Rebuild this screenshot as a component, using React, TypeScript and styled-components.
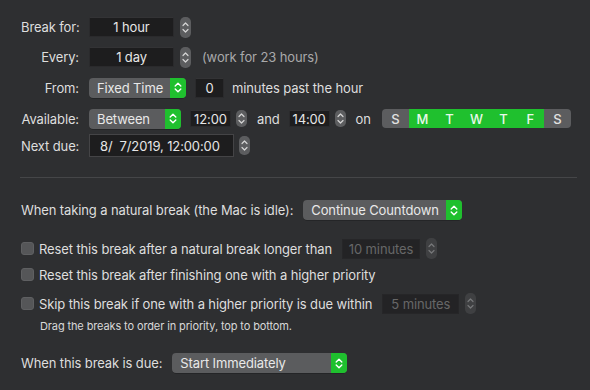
import React from "react";
import styled, { createGlobalStyle } from "styled-components";

const Global = createGlobalStyle`
  html, body { margin: 0; padding: 0; background: #2e2f31; }
  body { width: 590px; height: 390px; overflow: hidden; font-family: Inter, "Noto Sans", sans-serif; font-size: 13px; letter-spacing: -0.12px; color: #dedede; -webkit-font-smoothing: antialiased; }
`;

const Page = styled.div`
  width: 590px;
  height: 390px;
  box-sizing: border-box;
  padding: 12px 13px 0 21px;
  display: flex;
  flex-direction: column;
`;

const Row = styled.div<{ $h: number; $mt?: number }>`
  display: flex;
  align-items: center;
  height: ${(p) => p.$h}px;
  margin-top: ${(p) => p.$mt ?? 0}px;
`;

const Label = styled.div`
  width: 58px;
  text-align: right;
  margin-right: 10px;
  white-space: nowrap;
  color: #dedede;
`;

const Text = styled.span<{ $ml?: number; $muted?: boolean }>`
  margin-left: ${(p) => p.$ml ?? 0}px;
  white-space: nowrap;
  color: ${(p) => (p.$muted ? "#a9a9aa" : "#dedede")};
`;

const Field = styled.div<{ $w: number; $h?: number; $align?: string; $disabled?: boolean; $ml?: number; $pad?: number }>`
  box-sizing: border-box;
  width: ${(p) => p.$w}px;
  height: ${(p) => p.$h ?? 20}px;
  margin-left: ${(p) => p.$ml ?? 0}px;
  background: ${(p) => (p.$disabled ? "#232325" : "#1d1d1e")};
  border: 1px solid ${(p) => (p.$disabled ? "#262628" : "#2a2a2c")};
  border-top-color: ${(p) => (p.$disabled ? "#262628" : "#333335")};
  color: ${(p) => (p.$disabled ? "#676768" : "#e6e6e6")};
  display: flex;
  align-items: center;
  justify-content: ${(p) => p.$align ?? "center"};
  padding-left: ${(p) => p.$pad ?? 0}px;
  white-space: nowrap;
  font-size: 13px;
`;

const BorderField = styled(Field)`
  border: 1px solid #444446;
`;

const StepperBox = styled.div<{ $ml?: number; $disabled?: boolean; $h?: number }>`
  width: 11px;
  height: ${(p) => p.$h ?? 21}px;
  margin-left: ${(p) => p.$ml ?? 6}px;
  border-radius: 5px;
  background: ${(p) => (p.$disabled ? "#3f4042" : "#5c5d5f")};
  display: flex;
  align-items: center;
  justify-content: center;
`;

const Stepper: React.FC<{ ml?: number; disabled?: boolean; h?: number }> = ({ ml, disabled, h }) => (
  <StepperBox $ml={ml} $disabled={disabled} $h={h}>
    <svg width="7" height="13" viewBox="0 0 7 13">
      <path
        d="M1 4.5 L3.5 2 L6 4.5 M1 8.5 L3.5 11 L6 8.5"
        fill="none"
        stroke={disabled ? "#77787a" : "#d6d6d6"}
        strokeWidth="1.2"
        strokeLinecap="round"
        strokeLinejoin="round"
      />
    </svg>
  </StepperBox>
);

const PopupBox = styled.div<{ $w: number; $ml?: number }>`
  box-sizing: border-box;
  width: ${(p) => p.$w}px;
  height: 20px;
  margin-left: ${(p) => p.$ml ?? 0}px;
  border-radius: 4px;
  background: #5b5c5e;
  display: flex;
  align-items: stretch;
  overflow: hidden;
  box-shadow: 0 0.5px 0 rgba(0, 0, 0, 0.4);
`;

const PopupLabel = styled.div`
  flex: 1;
  display: flex;
  align-items: center;
  padding-left: 8px;
  color: #e8e8e8;
  white-space: nowrap;
`;

const PopupArrow = styled.div`
  width: 16px;
  background: #1fc02e;
  display: flex;
  align-items: center;
  justify-content: center;
`;

const Popup: React.FC<{ w: number; ml?: number; children: React.ReactNode }> = ({ w, ml, children }) => (
  <PopupBox $w={w} $ml={ml}>
    <PopupLabel>{children}</PopupLabel>
    <PopupArrow>
      <svg width="8" height="13" viewBox="0 0 8 13">
        <path
          d="M1.2 5 L4 2.2 L6.8 5 M1.2 8 L4 10.8 L6.8 8"
          fill="none"
          stroke="#ffffff"
          strokeWidth="1.4"
          strokeLinecap="round"
          strokeLinejoin="round"
        />
      </svg>
    </PopupArrow>
  </PopupBox>
);

const Days = styled.div`
  display: flex;
  margin-left: 11px;
  height: 19px;
  border-radius: 4px;
  overflow: hidden;
`;

const Day = styled.div<{ $on: boolean }>`
  width: 27px;
  display: flex;
  align-items: center;
  justify-content: center;
  background: ${(p) => (p.$on ? "#1fc02e" : "#5c5d5f")};
  color: ${(p) => (p.$on ? "#e9f8ea" : "#e2e2e2")};
  font-weight: 500;
  font-size: 13px;
`;

const Separator = styled.div`
  height: 1px;
  background: #454648;
  margin: 20px 0 0 -1px;
  width: 557px;
`;

const Check = styled.div`
  box-sizing: border-box;
  width: 13px;
  height: 13px;
  border-radius: 3px;
  background: #555658;
  border: 1px solid #5f6062;
  margin-right: 5px;
  flex-shrink: 0;
`;

const Note = styled.div`
  margin-left: 19px;
  font-size: 11px;
  color: #d8d8d8;
  height: 14px;
  display: flex;
  align-items: center;
  margin-top: 5px;
`;

const days = ["S", "M", "T", "W", "T", "F", "S"];

export default function App() {
  return (
    <Page>
      <Global />
      <Row $h={30}>
        <Label>Break for:</Label>
        <Field $w={85}>1 hour</Field>
        <Stepper ml={6} />
      </Row>
      <Row $h={30}>
        <Label>Every:</Label>
        <Field $w={85}>1 day</Field>
        <Stepper ml={6} />
        <Text $ml={11} $muted>(work for 23 hours)</Text>
      </Row>
      <Row $h={31}>
        <Label>From:</Label>
        <Popup w={97}>Fixed Time</Popup>
        <Field $w={29} $ml={9}>0</Field>
        <Text $ml={8}>minutes past the hour</Text>
      </Row>
      <Row $h={31}>
        <Label>Available:</Label>
        <Popup w={92}>Between</Popup>
        <Field $w={41} $ml={9} $h={17}>12:00</Field>
        <Stepper ml={5} h={17} />
        <Text $ml={10}>and</Text>
        <Field $w={41} $ml={9} $h={17}>14:00</Field>
        <Stepper ml={5} h={17} />
        <Text $ml={10}>on</Text>
        <Days>
          {days.map((d, i) => (
            <Day key={i} $on={i > 0 && i < 6}>{d}</Day>
          ))}
        </Days>
      </Row>
      <Row $h={23}>
        <Label>Next due:</Label>
        <BorderField $w={145} $h={23} $align="flex-start" $pad={10}>8/&nbsp;&nbsp;7/2019, 12:00:00</BorderField>
        <Stepper ml={5} h={19} />
      </Row>
      <Separator />
      <Row $h={20} $mt={22}>
        <Text>When taking a natural break (the Mac is idle):</Text>
        <Popup w={159} ml={10}>Continue Countdown</Popup>
      </Row>
      <Row $h={21} $mt={18}>
        <Check />
        <Text>Reset this break after a natural break longer than</Text>
        <Field $w={78} $ml={10} $disabled>10 minutes</Field>
        <Stepper ml={6} disabled />
      </Row>
      <Row $h={21} $mt={5}>
        <Check />
        <Text>Reset this break after finishing one with a higher priority</Text>
      </Row>
      <Row $h={21} $mt={8}>
        <Check />
        <Text>Skip this break if one with a higher priority is due within</Text>
        <Field $w={77} $ml={10} $disabled>5 minutes</Field>
        <Stepper ml={6} disabled />
      </Row>
      <Note>Drag the breaks to order in priority, top to bottom.</Note>
      <Row $h={20} $mt={20}>
        <Text>When this break is due:</Text>
        <Popup w={175} ml={10}>Start Immediately</Popup>
      </Row>
    </Page>
  );
}
